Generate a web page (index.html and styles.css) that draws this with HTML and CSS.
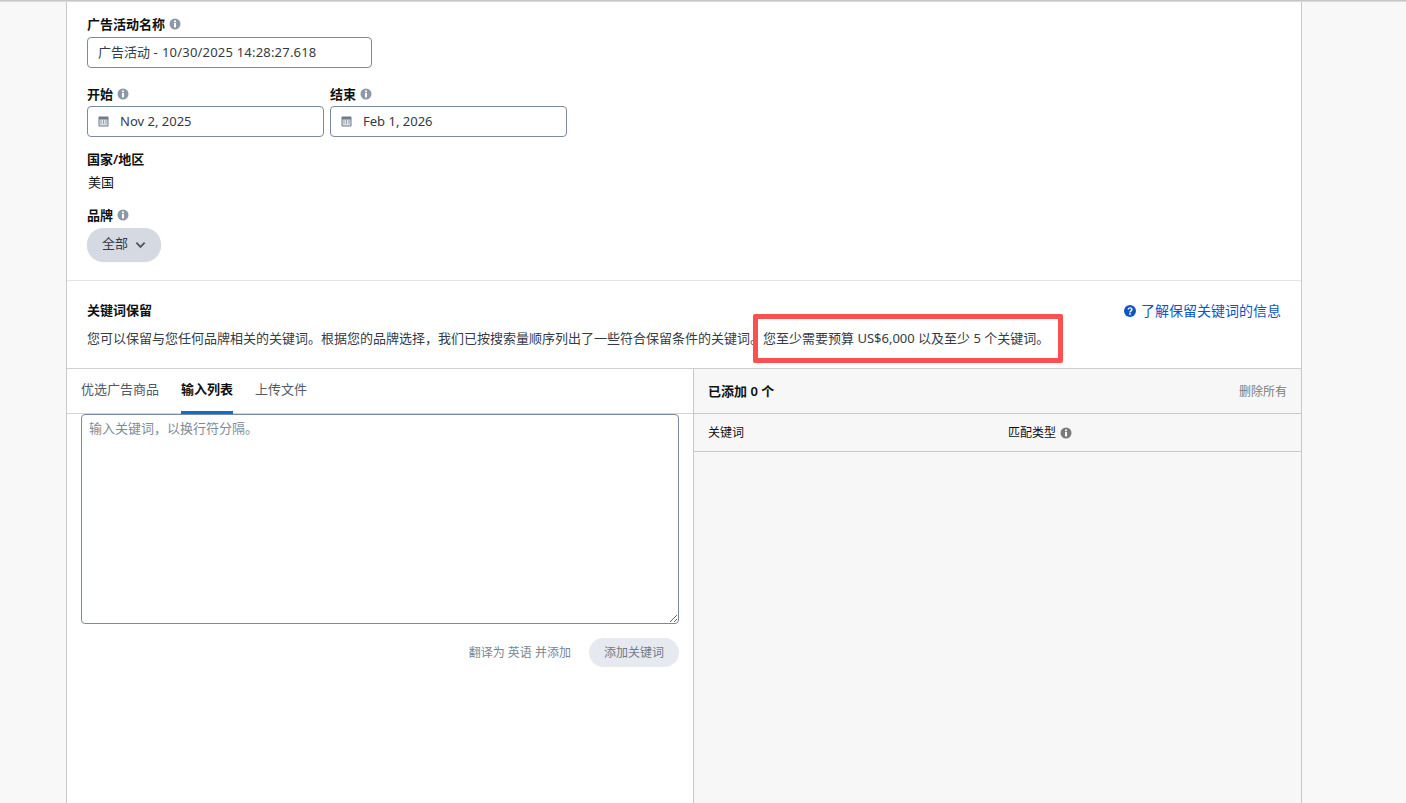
FILE: index.html
```html
<!DOCTYPE html>
<html lang="zh-CN">
<head>
<meta charset="utf-8">
<title>广告活动</title>
<link rel="stylesheet" href="styles.css">
</head>
<body>
<div class="topline"></div>
<main class="card">
  <section class="form">
    <div class="field">
      <div class="label">广告活动名称 <svg class="info" viewBox="0 0 12 12"><circle cx="6" cy="6" r="5.5"/><rect x="5" y="5" width="2" height="4.4" fill="#fff"/><rect x="5" y="2.5" width="2" height="1.7" fill="#fff"/></svg></div>
      <div class="input name">广告活动 -&nbsp;<span class="stamp">10/30/2025 14:28:27.618</span></div>
    </div>
    <div class="dates">
      <div class="field date">
        <div class="label">开始 <svg class="info" viewBox="0 0 12 12"><circle cx="6" cy="6" r="5.5"/><rect x="5" y="5" width="2" height="4.4" fill="#fff"/><rect x="5" y="2.5" width="2" height="1.7" fill="#fff"/></svg></div>
        <div class="input"><svg class="cal" viewBox="0 0 11 11"><rect x="0.5" y="0.5" width="10" height="10" rx="1" fill="#6f7a8a"/><rect x="1.5" y="3.5" width="8" height="6" fill="#dfe2e7"/><path d="M2.5 5h1M5 5h1M7.5 5h1M2.5 7h1M5 7h1M7.5 7h1" stroke="#5f6b7c"/></svg>Nov 2, 2025</div>
      </div>
      <div class="field date">
        <div class="label">结束 <svg class="info" viewBox="0 0 12 12"><circle cx="6" cy="6" r="5.5"/><rect x="5" y="5" width="2" height="4.4" fill="#fff"/><rect x="5" y="2.5" width="2" height="1.7" fill="#fff"/></svg></div>
        <div class="input"><svg class="cal" viewBox="0 0 11 11"><rect x="0.5" y="0.5" width="10" height="10" rx="1" fill="#6f7a8a"/><rect x="1.5" y="3.5" width="8" height="6" fill="#dfe2e7"/><path d="M2.5 5h1M5 5h1M7.5 5h1M2.5 7h1M5 7h1M7.5 7h1" stroke="#5f6b7c"/></svg>Feb 1, 2026</div>
      </div>
    </div>
    <div class="country">
      <div class="label">国家/地区</div>
      <div class="value">美国</div>
    </div>
    <div class="field">
      <div class="label">品牌 <svg class="info" viewBox="0 0 12 12"><circle cx="6" cy="6" r="5.5"/><rect x="5" y="5" width="2" height="4.4" fill="#fff"/><rect x="5" y="2.5" width="2" height="1.7" fill="#fff"/></svg></div>
      <div class="pill"><span class="pill-text">全部</span><svg class="chev" viewBox="0 0 12 8"><path d="M1.5 1.5 6 6l4.5-4.5" fill="none" stroke="#4a5462" stroke-width="2"/></svg></div>
    </div>
  </section>
  <section class="intro">
    <div class="intro-head">
      <div class="title">关键词保留</div>
      <a class="learn"><svg class="help" viewBox="0 0 12 12"><circle cx="6" cy="6" r="6" fill="#0b57c4"/><path d="M4.2 4.6c0-2.3 3.7-2.3 3.7-.1 0 1.4-1.9 1.3-1.9 3" fill="none" stroke="#fff" stroke-width="1.4"/><rect x="5.2" y="8.2" width="1.6" height="1.6" fill="#fff"/></svg>了解保留关键词的信息</a>
    </div>
    <p class="desc">您可以保留与您任何品牌相关的关键词。根据您的品牌选择，我们已按搜索量顺序列出了一些符合保留条件的关键词。您至少需要预算 US$6,000 以及至少 5 个关键词。</p>
  </section>
  <section class="columns">
    <div class="left">
      <nav class="tabs">
        <span class="tab">优选广告商品</span>
        <span class="tab active">输入列表</span>
        <span class="tab">上传文件</span>
      </nav>
      <div class="entry">
        <textarea class="keywords" placeholder="输入关键词，以换行符分隔。"></textarea>
        <div class="actions">
          <span class="translate">翻译为 英语 并添加</span>
          <span class="add">添加关键词</span>
        </div>
      </div>
    </div>
    <div class="right">
      <div class="right-head">
        <strong>已添加 0 个</strong>
        <span class="remove">删除所有</span>
      </div>
      <div class="table-head">
        <span class="col-key">关键词</span>
        <span class="col-match">匹配类型 <svg class="info dark" viewBox="0 0 12 12"><circle cx="6" cy="6" r="5.5"/><rect x="5" y="5" width="2" height="4.4" fill="#f7f7f7"/><rect x="5" y="2.5" width="2" height="1.7" fill="#f7f7f7"/></svg></span>
      </div>
    </div>
  </section>
</main>
<div class="highlight"></div>
</body>
</html>
```
FILE: styles.css
```css
* { box-sizing: border-box; }
html, body { margin: 0; height: 803px; overflow: hidden; }
body {
  background: #f8f8f8;
  color: #0f1111;
  font-family: "Noto Sans", "Noto Sans CJK SC", sans-serif;
  font-size: 13px;
  line-height: 18px;
  position: relative;
}
.topline { height: 2px; background: linear-gradient(#bdbdbd, #e4e4e4); }
.card {
  width: 1236px;
  height: 801px;
  margin-left: 66px;
  background: #fff;
  border-left: 1px solid #c9c9c9;
  border-right: 1px solid #c9c9c9;
  display: flex;
  flex-direction: column;
}
.form { height: 279px; padding: 13px 20px 0; border-bottom: 1px solid #e4e4e4; }
.label { font-weight: 600; height: 18px; display: flex; align-items: center; gap: 4px; color: #0f1111; }
.info { width: 12px; height: 12px; fill: #8d98a9; flex: none; }
.info.dark { fill: #7a7a7a; }
.input {
  height: 31px;
  width: 237px;
  margin-top: 3px;
  border: 1px solid #7d8a9e;
  border-radius: 4px;
  padding: 0 0 2px 10px;
  display: flex;
  align-items: center;
  color: #333b47;
}
.input.name { width: 285px; margin-top: 4px; }
.stamp { letter-spacing: .2px; padding-left: 1px; }
.cal { width: 11px; height: 11px; margin: 2px 11px 0 0; flex: none; }
.dates { display: flex; gap: 6px; margin-top: 17px; }
.country { margin-top: 13px; }
.value { margin-top: 5px; margin-left: 1px; }
.country + .field { margin-top: 15px; }
.pill {
  width: 74px;
  height: 33px;
  margin-top: 4px;
  border-radius: 17px;
  background: #d5d9e1;
  box-shadow: 0 1px 1px rgba(15, 17, 17, .18);
  color: #333b47;
  display: flex;
  align-items: center;
  gap: 7px;
  padding-left: 15px;
}
.pill-text { margin-bottom: 3px; }
.chev { width: 11px; height: 8px; }
.intro { height: 88px; padding: 21px 20px 0; border-bottom: 1px solid #cfcfcf; }
.intro-head { display: flex; justify-content: space-between; align-items: center; height: 18px; }
.title { font-weight: 600; margin-bottom: 2px; }
.learn { color: #0b57c4; display: flex; align-items: center; gap: 5px; font-size: 14px; }
.help { width: 12px; height: 12px; }
.desc { margin: 9px 0 0; color: #333b47; white-space: nowrap; }
.columns { flex: 1; display: flex; }
.left { width: 627px; border-right: 1px solid #c9c9c9; }
.tabs { height: 45px; display: flex; gap: 22px; padding-left: 14px; border-bottom: 1px solid #d4d4d4; }
.tab { height: 45px; padding-top: 11px; color: #4f5a69; }
.tab.active { color: #0f1111; font-weight: 600; border-bottom: 3px solid #0a6fc9; }
.entry { padding: 0 14px; }
.keywords {
  display: block;
  width: 598px;
  height: 210px;
  border: 1px solid #7d8a9e;
  border-radius: 4px;
  padding: 4px 7px;
  margin: 0;
  font: inherit;
  outline: none;
  background: #fff;
}
.keywords::placeholder { color: #7f8a98; opacity: 1; }
.actions { display: flex; justify-content: flex-end; align-items: center; gap: 18px; margin-top: 14px; }
.translate { font-size: 12px; color: #7a8594; }
.add {
  width: 90px;
  height: 29px;
  border-radius: 15px;
  background: #e6e9ef;
  color: #717a88;
  font-size: 12px;
  display: flex;
  align-items: center;
  justify-content: center;
}
.right { flex: 1; background: #f7f7f7; }
.right-head {
  height: 45px;
  display: flex;
  justify-content: space-between;
  align-items: center;
  padding: 0 14px;
  border-bottom: 1px solid #c9c9c9;
}
.right-head strong { font-weight: 600; }
.remove { font-size: 12px; color: #7d7d7d; padding-top: 2px; }
.table-head {
  height: 38px;
  display: flex;
  align-items: center;
  padding-left: 14px;
  border-bottom: 1px solid #c9c9c9;
  font-size: 12px;
}
.col-key { width: 300px; }
.col-match { display: flex; align-items: center; gap: 4px; }
.highlight {
  position: absolute;
  left: 753px;
  top: 314px;
  width: 310px;
  height: 49px;
  border: 5px solid #fc5050;
  border-radius: 2px;
}
```
